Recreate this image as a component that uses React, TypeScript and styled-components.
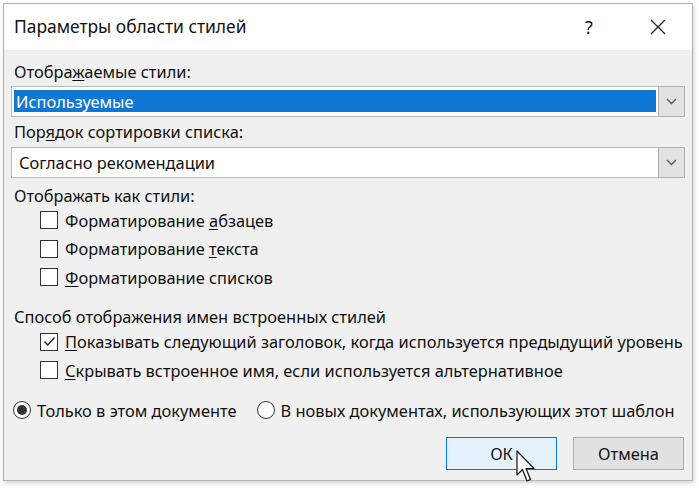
import React from "react"
import styled, { createGlobalStyle } from "styled-components"

const GlobalStyle = createGlobalStyle`
  html, body {
    margin: 0;
    padding: 0;
    background: #ffffff;
  }
  body {
    font-family: "Noto Sans", "Liberation Sans", sans-serif;
    color: #111;
  }
`

const Page = styled.div`
  width: 699px;
  height: 488px;
  padding: 3px 0 0 3px;
  box-sizing: border-box;
  background: #fff;
`

const Dialog = styled.div`
  position: relative;
  width: 690px;
  height: 478px;
  box-sizing: border-box;
  border: 1px solid #b4b4b4;
  background: #f0f0f0;
  box-shadow: 1px 2px 4px rgba(0, 0, 0, 0.18);
  display: flex;
  flex-direction: column;
`

const TitleBar = styled.div`
  height: 46px;
  background: #fff;
  display: flex;
  align-items: center;
  padding: 0 0 0 10px;
  flex-shrink: 0;
`

const Title = styled.div`
  flex: 1;
  font-size: 17.4px;
  padding-bottom: 2px;
`

const TitleButton = styled.div<{ $w: number }>`
  width: ${(p) => p.$w}px;
  height: 46px;
  display: flex;
  align-items: center;
  justify-content: center;
  font-size: 18px;
  color: #222;
`

const Body = styled.div`
  flex: 1;
  padding: 12px 7px 0 7px;
  display: flex;
  flex-direction: column;
`

const Label = styled.div<{ $mt?: number }>`
  font-size: 16.4px;
  line-height: 20px;
  margin-top: ${(p) => p.$mt ?? 0}px;
  padding-left: 3px;
`

const Select = styled.div<{ $mt?: number }>`
  margin-top: ${(p) => p.$mt ?? 0}px;
  height: 31px;
  width: 674px;
  box-sizing: border-box;
  border: 1px solid #b9b9b9;
  background: #fff;
  display: flex;
`

const SelectValue = styled.div<{ $selected?: boolean }>`
  flex: 1;
  margin: 3px 2px 4px 2px;
  display: flex;
  align-items: center;
  padding-left: ${(p) => (p.$selected ? 2 : 5)}px;
  font-size: 16.4px;
  background: ${(p) => (p.$selected ? "#0f78d4" : "transparent")};
  color: ${(p) => (p.$selected ? "#fff" : "#111")};
`

const SelectArrow = styled.div`
  width: 25px;
  margin: -1px -1px -1px 0;
  border: 1px solid #b0b0b0;
  background: #e2e2e2;
  display: flex;
  align-items: center;
  justify-content: center;
`

const Options = styled.div<{ $mt?: number }>`
  margin-top: ${(p) => p.$mt ?? 0}px;
  padding-left: 29px;
  display: flex;
  flex-direction: column;
`

const CheckRow = styled.label`
  height: 28.5px;
  display: flex;
  align-items: center;
  gap: 7px;
  font-size: 16.4px;
`

const Box = styled.span`
  width: 18px;
  height: 18px;
  box-sizing: border-box;
  border: 1px solid #333;
  background: #fff;
  display: flex;
  align-items: center;
  justify-content: center;
  flex-shrink: 0;
`

const RadioRow = styled.div`
  margin-top: 14px;
  display: flex;
  align-items: center;
  gap: 20px;
  padding-left: 2px;
`

const Radio = styled.label`
  display: flex;
  align-items: center;
  gap: 6px;
  font-size: 16.4px;
`

const Circle = styled.span<{ $on?: boolean }>`
  width: 18px;
  height: 18px;
  box-sizing: border-box;
  border-radius: 50%;
  border: 1px solid #333;
  background: #fff;
  display: flex;
  align-items: center;
  justify-content: center;
  &::after {
    content: "";
    width: 10px;
    height: 10px;
    border-radius: 50%;
    background: ${(p) => (p.$on ? "#333" : "transparent")};
  }
`

const Footer = styled.div`
  margin-top: 15px;
  display: flex;
  justify-content: flex-end;
  gap: 16px;
  padding-right: 1px;
`

const Button = styled.div<{ $default?: boolean }>`
  position: relative;
  width: 111px;
  height: 33px;
  box-sizing: border-box;
  display: flex;
  align-items: center;
  justify-content: center;
  font-size: 16.4px;
  border: 1px solid ${(p) => (p.$default ? "#0078d7" : "#adadad")};
  background: ${(p) => (p.$default ? "#e5f1fb" : "#e1e1e1")};
`

const Cursor = styled.svg`
  position: absolute;
  left: 69px;
  top: 12px;
`

const U = styled.span`
  text-decoration: underline;
  text-underline-offset: 2px;
`

const Chevron = () => (
  <svg width="11" height="7" viewBox="0 0 11 7">
    <path d="M1 1 L5.5 5.5 L10 1" fill="none" stroke="#555" strokeWidth="1.3" />
  </svg>
)

const Check = () => (
  <svg width="13" height="11" viewBox="0 0 13 11">
    <path d="M1.5 5.5 L4.8 9 L11.5 1.5" fill="none" stroke="#222" strokeWidth="1.4" />
  </svg>
)

const CheckBox = ({ checked, children }: { checked?: boolean; children: React.ReactNode }) => (
  <CheckRow>
    <Box>{checked && <Check />}</Box>
    <span>{children}</span>
  </CheckRow>
)

export default function App() {
  return (
    <Page>
      <GlobalStyle />
      <Dialog>
        <TitleBar>
          <Title>Параметры области стилей</Title>
          <TitleButton $w={70}>?</TitleButton>
          <TitleButton $w={68}>
            <svg width="16" height="16" viewBox="0 0 16 16">
              <path d="M1 1 L15 15 M15 1 L1 15" stroke="#222" strokeWidth="1.3" />
            </svg>
          </TitleButton>
        </TitleBar>
        <Body>
          <Label>
            Отобра<U>ж</U>аемые стили:
          </Label>
          <Select $mt={4}>
            <SelectValue $selected>Используемые</SelectValue>
            <SelectArrow>
              <Chevron />
            </SelectArrow>
          </Select>
          <Label $mt={5}>
            Пор<U>я</U>док сортировки списка:
          </Label>
          <Select $mt={5}>
            <SelectValue>Согласно рекомендации</SelectValue>
            <SelectArrow>
              <Chevron />
            </SelectArrow>
          </Select>
          <Label $mt={8}>Отображать как стили:</Label>
          <Options $mt={0}>
            <CheckBox>
              Форматирование <U>а</U>бзацев
            </CheckBox>
            <CheckBox>
              Форматирование <U>т</U>екста
            </CheckBox>
            <CheckBox>
              <U>Ф</U>орматирование списков
            </CheckBox>
          </Options>
          <Label $mt={15}>Способ отображения имен встроенных стилей</Label>
          <Options $mt={1}>
            <CheckBox checked>
              <U>П</U>оказывать следующий заголовок, когда используется предыдущий уровень
            </CheckBox>
            <CheckBox>
              <U>С</U>крывать встроенное имя, если используется альтернативное
            </CheckBox>
          </Options>
          <RadioRow>
            <Radio>
              <Circle $on />
              Только в этом документе
            </Radio>
            <Radio>
              <Circle />В новых документах, использующих этот шаблон
            </Radio>
          </RadioRow>
          <Footer>
            <Button $default>
              ОК
              <Cursor width="20" height="34" viewBox="0 0 20 34">
                <path
                  d="M1 1 L1 25 L6.5 19.5 L11 31 L14.5 29.5 L10 18.5 L18 18.5 Z"
                  fill="#fff"
                  stroke="#111"
                  strokeWidth="1.2"
                  strokeLinejoin="round"
                />
              </Cursor>
            </Button>
            <Button>Отмена</Button>
          </Footer>
        </Body>
      </Dialog>
    </Page>
  )
}
